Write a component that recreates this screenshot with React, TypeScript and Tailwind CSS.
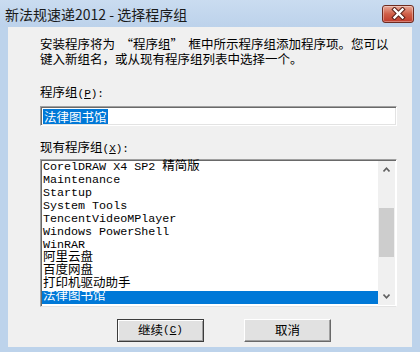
const CJK = "font-['Noto_Sans_CJK_SC','Noto_Sans',sans-serif]";
const MONO = "font-['Liberation_Mono','Noto_Sans_CJK_SC',monospace]";

const groups = [
  "CorelDRAW X4 SP2 精简版",
  "Maintenance",
  "Startup",
  "System Tools",
  "TencentVideoMPlayer",
  "Windows PowerShell",
  "WinRAR",
  "阿里云盘",
  "百度网盘",
  "打印机驱动助手",
  "法律图书馆",
];

// wide glyphs in the list are drawn a bit larger than the mono latin ones
function ListText({ text }: { text: string }) {
  const parts = text.split(/([\u4e00-\u9fff]+)/).filter(Boolean);
  return (
    <>
      {parts.map((p, i) =>
        /[\u4e00-\u9fff]/.test(p) ? (
          <span key={i} className="text-[12.5px]">
            {p}
          </span>
        ) : (
          <span key={i}>{p}</span>
        ),
      )}
    </>
  );
}

function Mnemonic({ k, tail = "" }: { k: string; tail?: string }) {
  return (
    <span className={`${MONO} text-[11px] leading-none`}>
      (<span className="underline">{k}</span>){tail}
    </span>
  );
}

function CloseButton() {
  return (
    <div className="flex h-[18px] w-[32px] items-center justify-center rounded-[3px] border border-[#6e2b20] bg-gradient-to-b from-[#e8a898] via-[#cf5f48] to-[#c0392a] shadow-[inset_0_0_0_1px_rgba(255,255,255,0.35)]">
      <svg width="15" height="13" viewBox="0 0 15 13">
        <path d="M3.5 2.5 L11.5 10.5 M11.5 2.5 L3.5 10.5" stroke="#5a2018" strokeWidth="4.4" strokeLinecap="square" />
        <path d="M3.5 2.5 L11.5 10.5 M11.5 2.5 L3.5 10.5" stroke="#ffffff" strokeWidth="2.4" strokeLinecap="square" />
      </svg>
    </div>
  );
}

function Chevron({ up }: { up?: boolean }) {
  return (
    <svg width="7" height="5" viewBox="0 0 7 5">
      <path
        d={up ? "M0.5 4.5 L3.5 1.2 L6.5 4.5" : "M0.5 0.5 L3.5 3.8 L6.5 0.5"}
        fill="none"
        stroke="#606060"
        strokeWidth="1.6"
      />
    </svg>
  );
}

function Button({ label, mnemonic, isDefault }: { label: string; mnemonic?: string; isDefault?: boolean }) {
  return (
    <div
      className={`flex h-[23px] w-[87px] items-center justify-center bg-[#e1e1e1] text-[12.5px] text-black ${
        isDefault
          ? "border border-[#3c3c3c] shadow-[inset_1px_1px_0_#ffffff,inset_-1px_-1px_0_#a0a0a0]"
          : "border border-t-white border-l-white border-r-[#696969] border-b-[#696969] shadow-[inset_-1px_-1px_0_#a0a0a0]"
      }`}
    >
      {label}
      {mnemonic && <Mnemonic k={mnemonic} />}
    </div>
  );
}

export default function App() {
  return (
    <div className={`flex h-[352px] w-[420px] flex-col bg-[#bdd3eb] ${CJK}`}>
      {/* title bar */}
      <div className="flex h-[27px] items-center justify-between bg-gradient-to-b from-[#cadcf0] to-[#bcd2eb] pl-[5px] pr-[6px]">
        <span className="text-[14px] leading-none text-[#1a1a1a]">新法规速递2012 - 选择程序组</span>
        <CloseButton />
      </div>

      {/* client area */}
      <div className="mx-[8px] mb-[5px] flex flex-1 flex-col bg-[#f0f0f0] pl-[32px] pr-[15px] pt-[9px] text-[12.5px] text-black">
        <p className="leading-[15px]">
          安装程序将为<span className="inline-block w-[18px] text-right">“</span>程序组
          <span className="inline-block w-[18px] text-left">”</span>框中所示程序组添加程序项。您可以
          <br />
          键入新组名，或从现有程序组列表中选择一个。
        </p>

        <div className="mt-[18px] h-[15px] leading-[15px]">
          程序组
          <Mnemonic k="P" tail=":" />
        </div>

        <div className="mt-[7px] flex h-[20px] items-center border border-t-[#a0a0a0] border-l-[#a0a0a0] border-r-white border-b-white bg-white pl-[2px] shadow-[inset_1px_1px_0_#696969,inset_-1px_-1px_0_#e3e3e3]">
          <span className="bg-[#0078d7] px-[1px] leading-[15px] text-white">法律图书馆</span>
        </div>

        <div className="mt-[13px] h-[15px] leading-[15px]">
          现有程序组
          <Mnemonic k="X" tail=":" />
        </div>

        <div className="mt-[5px] flex h-[148px] border border-t-[#a0a0a0] border-l-[#a0a0a0] border-r-white border-b-[#e3e3e3] bg-white p-[1px] shadow-[inset_1px_1px_0_#696969]">
          <div className={`flex flex-1 flex-col ${MONO} text-[11.7px]`}>
            {groups.map((g, i) => (
              <div
                key={g}
                className={`h-[13px] shrink-0 whitespace-pre pl-[1px] leading-[13px] ${
                  i === groups.length - 1 ? "bg-[#0078d7] text-white" : "text-black"
                }`}
              >
                <ListText text={g} />
              </div>
            ))}
          </div>
          <div className="flex w-[17px] flex-col bg-[#f0f0f0]">
            <div className="flex h-[17px] items-center justify-center">
              <Chevron up />
            </div>
            <div className="mx-[1px] mt-[30px] h-[49px] bg-[#cdcdcd]" />
            <div className="flex-1" />
            <div className="flex h-[17px] items-center justify-center">
              <Chevron />
            </div>
          </div>
        </div>

        <div className="mt-[12px] flex gap-[40px] pl-[77px]">
          <Button label="继续" mnemonic="C" isDefault />
          <Button label="取消" />
        </div>
      </div>
    </div>
  );
}
